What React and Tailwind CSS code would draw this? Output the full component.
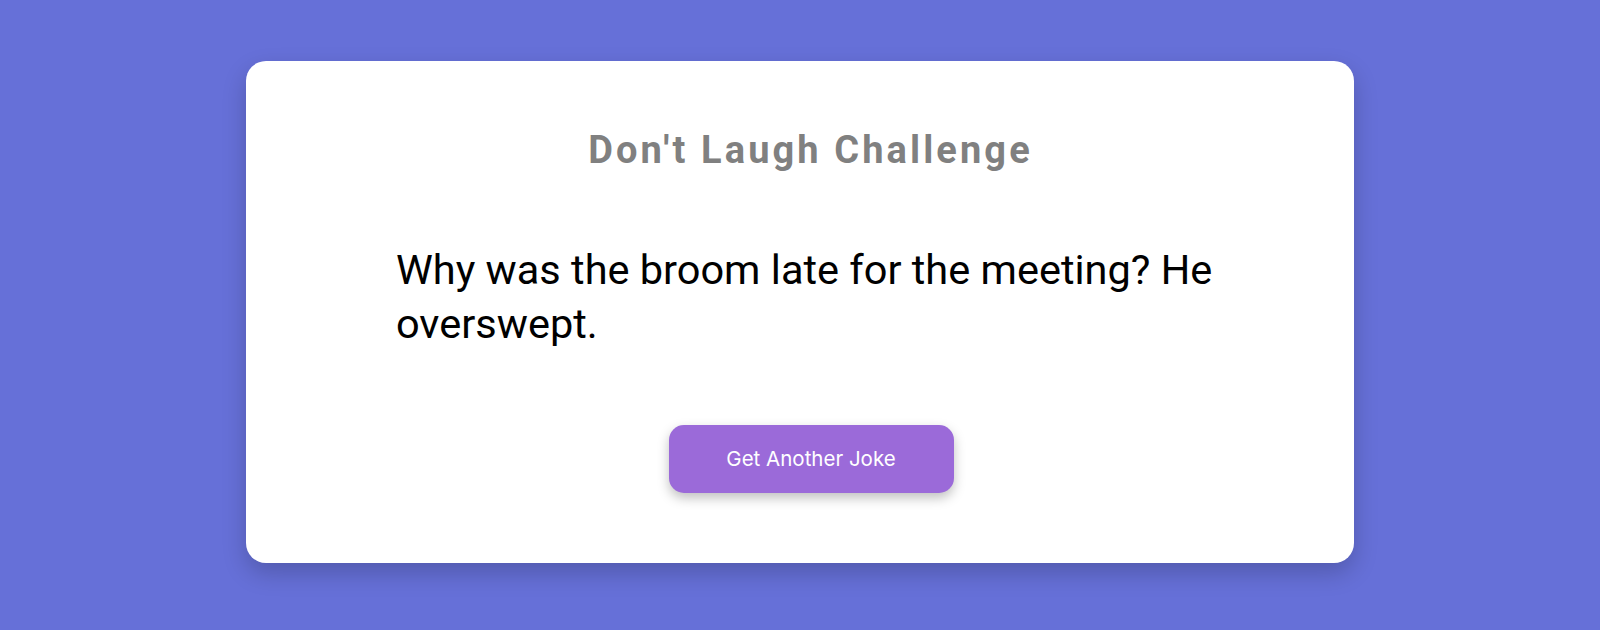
import React from "react";

export default function App() {
  return (
    <div className="h-[630px] bg-[#6670d8] pt-[61px] overflow-hidden">
      {/* Card */}
      <div className="mx-auto w-[1108px] h-[502px] bg-white rounded-[20px] shadow-[0_10px_25px_rgba(0,0,0,0.2)] pt-[66px] font-['Roboto',sans-serif]">
        <h1 className="pl-[21px] text-center text-[38px] leading-[46px] font-bold tracking-[3.1px] text-[#808080]">
          Don't Laugh Challenge
        </h1>

        <p className="mt-[70px] pl-[150px] pr-[110px] text-[41.5px] leading-[54px] text-black">
          Why was the broom late for the meeting? He overswept.
        </p>

        <div className="mt-[74px] flex justify-center">
          <button className="ml-[22px] w-[285px] h-[68px] rounded-[15px] bg-[#9b6ad9] text-white text-[20.5px] font-['Inter',sans-serif] shadow-[0_5px_12px_rgba(0,0,0,0.25)]">
            Get Another Joke
          </button>
        </div>
      </div>
    </div>
  );
}
